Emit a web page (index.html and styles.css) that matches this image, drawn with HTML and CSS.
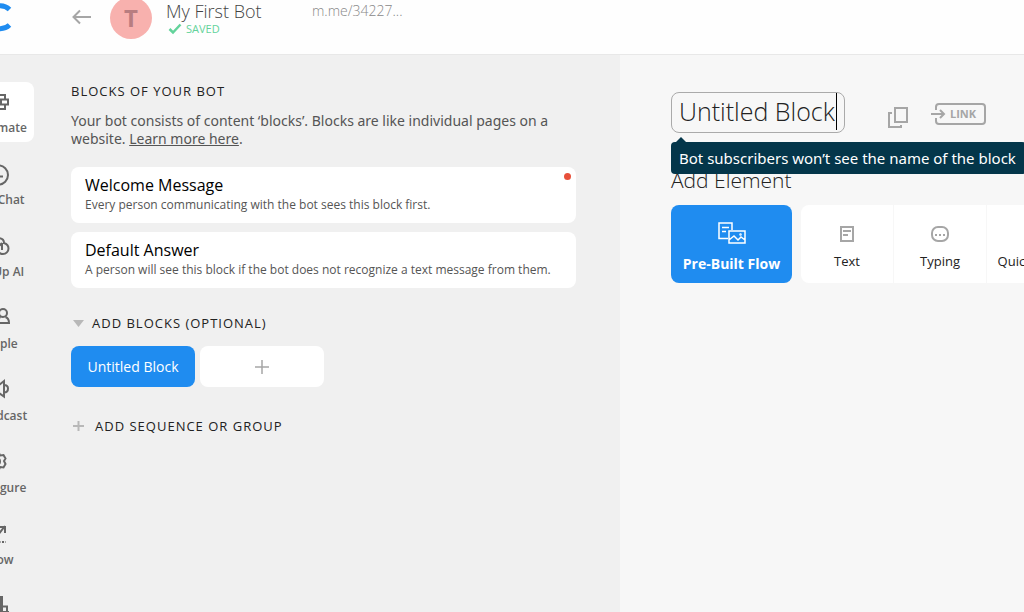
FILE: index.html
```html
<!DOCTYPE html><html lang="en"><head><meta charset="utf-8">
<title>My First Bot</title>
<meta name="viewport" content="width=device-width, initial-scale=1.0">
<link rel="stylesheet" href="styles.css">
</head>
<body>

<header class="header">
	<a class="logo" href="#" aria-label="Home">
		<svg width="32" height="32" viewBox="0 0 32 32"><path d="M27.500 8.500A13 11.500 0 1 0 27.500 24" fill="none" stroke="#1f8cf0" stroke-width="5"/></svg>
	</a>
	<button class="back" type="button" aria-label="Back">
		<svg width="20" height="16" viewBox="0 0 20 16"><path d="M19 8H2M8 1.500L1.500 8L8 14.500" fill="none" stroke="#a6a6a6" stroke-width="2"/></svg>
	</button>
	<div class="avatar">T</div>
	<div class="bot">
		<h1 class="bot-name">My First Bot</h1>
		<div class="saved">
			<svg width="14" height="12" viewBox="0 0 14 12"><path d="M1.500 6L5 9.500L12.500 1.500" fill="none" stroke="#63d39b" stroke-width="2.500"/></svg>
			SAVED
		</div>
	</div>
	<a class="bot-url" href="#">m.me/34227...</a>
</header>

<div class="page">

<nav class="nav">
	<a class="nav-item active" href="#">
		<svg class="nav-icon" viewBox="0 0 24 24"><path d="M10 5h9v4.500h-9zM15 9.500h7v5h-7zM10 14.500h9V19h-9zM3 9.500h7v5H3zM10 9.500v5"/></svg>
		Automate
	</a>
	<a class="nav-item" href="#">
		<svg class="nav-icon" viewBox="0 0 24 24"><circle cx="12.500" cy="13" r="9.500"/><path d="M9 9v2M9 14.500h8"/></svg>
		Live Chat
	</a>
	<a class="nav-item" href="#">
		<svg class="nav-icon" viewBox="0 0 24 24"><path d="M9 20a6 6 0 0 1-6-7c1-5 4-9 9-9c4 0 6 2 6 5c3 1 4.500 3 4.500 5.500a5.500 5.500 0 0 1-5.500 5.500c-4 0-5-2-5-5c0-2-1-3-3-3M12 13l4-4M16 9v7"/></svg>
		Set Up AI
	</a>
	<a class="nav-item" href="#">
		<svg class="nav-icon" viewBox="0 0 24 24"><circle cx="17" cy="7" r="4"/><path d="M14.500 11c-2 1-3 3-3 6H23c0-3-1-5-3.500-6M8 3a4 4 0 0 0-1 7M3 17c0-3 1-5 3-6M2 17h6"/></svg>
		People
	</a>
	<a class="nav-item" href="#">
		<svg class="nav-icon" viewBox="0 0 24 24"><path d="M18 3v15.500L13 15H5V7h8zM18 7c3 0 4 1.500 4 3.500S21 14.500 18 14.500"/></svg>
		Broadcast
	</a>
	<a class="nav-item" href="#">
		<svg class="nav-icon" viewBox="0 0 24 24"><path d="M9 3h4l1 2.500l3.500-.5l2 3.500l-1.500 2.500l1.500 3l-2 3.500l-3.500-.5l-1 2.500H9l-1-2.500l-3.500.5l-2-3.500L4 11.500L2.500 8.500l2-3.500l3.500.5z"/><circle cx="11" cy="11.500" r="3"/></svg>
		Configure
	</a>
	<a class="nav-item" href="#">
		<svg class="nav-icon" viewBox="0 0 24 24"><path d="M3 15l5-4l4 2l7-9M13 5h6v6"/><path d="M2 20h18" stroke-dasharray="2 1.500"/></svg>
		Grow
	</a>
	<a class="nav-item" href="#">
		<svg class="nav-icon" viewBox="0 0 24 24"><path d="M3 18V9h7v9M10 18V3h6v15M17 12.500h4V18M2 18h21M14 3v15"/></svg>
		Analyze
	</a>
</nav>

<main class="blocks">
	<h2 class="heading">BLOCKS OF YOUR BOT</h2>
	<p class="intro">Your bot consists of content ‘blocks’. Blocks are like individual pages on a website. <a href="#">Learn more here</a>.</p>

	<div class="cards">
		<a class="card" href="#">
			<span class="card-title">Welcome Message</span>
			<span class="card-text">Every person communicating with the bot sees this block first.</span>
			<span class="dot"></span>
		</a>
		<a class="card" href="#">
			<span class="card-title">Default Answer</span>
			<span class="card-text">A person will see this block if the bot does not recognize a text message from them.</span>
		</a>
	</div>

	<h2 class="heading group">
		<svg width="11" height="7" viewBox="0 0 11 7"><path d="M0 0h11L5.500 7z" fill="#b8b8b8"/></svg>
		ADD BLOCKS (OPTIONAL)
	</h2>
	<div class="tiles">
		<button class="tile selected" type="button">Untitled Block</button>
		<button class="tile" type="button" aria-label="Add block">
			<svg width="14" height="14" viewBox="0 0 14 14"><path d="M7 0v14M0 7h14" stroke="#a6a6a6" stroke-width="1.500"/></svg>
		</button>
	</div>

	<button class="heading add-group" type="button">
		<svg width="11" height="10" viewBox="0 0 11 10"><path d="M5.500 0v10M0 5h11" stroke="#b8b8b8" stroke-width="2"/></svg>
		ADD SEQUENCE OR GROUP
	</button>
</main>

<section class="editor">
	<div class="editor-top">
		<div class="name">
			<input class="name-input" type="text" value="Untitled Block" aria-label="Block name">
			<span class="caret"></span>
			<div class="tooltip">Bot subscribers won’t see the name of the block</div>
		</div>
		<button class="tool" type="button" aria-label="Copy block">
			<svg width="20" height="21" viewBox="0 0 20 21"><path d="M7 1h12v14H7zM4 6H1v14h12v-2" fill="none" stroke="#a6a6a6" stroke-width="2"/></svg>
		</button>
		<button class="tool link" type="button" aria-label="LINK">
			<svg width="55" height="22" viewBox="0 0 55 22"><path d="M5 7V4a3 3 0 0 1 3-3h43a3 3 0 0 1 3 3v14a3 3 0 0 1-3 3H8a3 3 0 0 1-3-3v-3M0 11h12M9 7l4 4l-4 4" fill="none" stroke="#a6a6a6" stroke-width="2"/></svg>
			<span class="link-text">LINK</span>
		</button>
	</div>

	<h2 class="add-title">Add Element</h2>
	<div class="elements">
		<button class="flow" type="button">
			<svg width="28" height="22" viewBox="0 0 28 22" fill="none" stroke="#fff" stroke-width="1.500"><path d="M10 16.500H1V1h13v7M4 5.500h7M4 9.500h4M11 9h16v12H11zM11 18l5-4l4 4l3-3l4 3"/><circle cx="22.500" cy="12.500" r=".5"/></svg>
			Pre-Built Flow
		</button>
		<div class="strip">
			<button class="element" type="button">
				<svg width="18" height="18" viewBox="0 0 18 18" fill="none" stroke="#a6a6a6" stroke-width="2"><path d="M3 2h12v14H3zM5 6h8M5 10h5"/></svg>
				Text
			</button>
			<button class="element" type="button">
				<svg width="18" height="18" viewBox="0 0 18 18" fill="none" stroke="#a6a6a6" stroke-width="2"><rect x="1" y="2" width="16" height="14" rx="6"/><path d="M4 10h2M8 10h2M12 10h2"/></svg>
				Typing
			</button>
			<button class="element" type="button">
				<svg width="18" height="18" viewBox="0 0 18 18" fill="none" stroke="#a6a6a6" stroke-width="2"><path d="M2 3h14v10H9l-4 3v-3H2z"/></svg>
				Quick Reply
			</button>
		</div>
	</div>
</section>

</div>

</body>
</html>
```
FILE: styles.css
```css
* {
	box-sizing: border-box;
}
body {
	margin: 0;
	height: 100vh;
	display: flex;
	flex-direction: column;
	overflow: hidden;
	background: #f0f0f0;
	color: #222;
	font-family: "Open Sans", "Noto Sans", sans-serif;
	font-size: 14px;
}
h1, h2, p {
	margin: 0;
}
a {
	color: inherit;
	text-decoration: none;
}
button {
	margin: 0;
	padding: 0;
	border: 0;
	background: none;
	color: inherit;
	font: inherit;
	cursor: pointer;
}
svg {
	display: block;
	flex: none;
}
.header {
	display: flex;
	align-items: flex-start;
	flex: none;
	height: 55px;
	border-bottom: 1px solid #e8e8e8;
	background: #fefefe;
}
.logo {
	margin: 1px 0 0 -18px;
}
.back {
	margin: 9px 0 0 58px;
}
.avatar {
	width: 42px;
	height: 42px;
	margin: -3px 0 0 18px;
	border-radius: 50%;
	background: #f8b1ae;
	color: #b87d80;
	font-size: 24px;
	font-weight: bold;
	line-height: 42px;
	text-align: center;
}
.bot {
	width: 146px;
	margin-left: 14px;
}
.bot-name {
	color: #444;
	font-size: 18px;
	font-weight: 300;
	line-height: 22px;
}
.saved {
	display: flex;
	align-items: center;
	gap: 4px;
	margin-left: 2px;
	color: #63d39b;
	font-size: 11px;
	line-height: 14px;
}
.bot-url {
	color: #888;
	font-size: 14px;
	font-weight: 300;
	line-height: 22px;
}
.page {
	display: flex;
	flex: 1;
	min-height: 0;
}
.nav {
	display: flex;
	flex-direction: column;
	gap: 12px;
	flex: none;
	width: 72px;
	margin: 27px 6px 0 -38px;
}
.nav-item {
	display: flex;
	flex-direction: column;
	align-items: center;
	gap: 4px;
	flex: none;
	height: 60px;
	padding-top: 8px;
	border-radius: 8px;
	color: #666;
	font-size: 12px;
	font-weight: 600;
	line-height: 19px;
	white-space: nowrap;
}
.nav-item.active {
	background: #fff;
}
.nav-icon {
	width: 24px;
	height: 24px;
	fill: none;
	stroke: #666;
	stroke-width: 2;
}
.blocks {
	flex: 0 0 580px;
	padding: 26px 44px 0 31px;
}
.heading {
	font-size: 13px;
	font-weight: 400;
	letter-spacing: 1px;
	line-height: 20px;
}
.intro {
	margin-top: 11px;
	color: #555;
	font-family: "Noto Sans", sans-serif;
	font-size: 14px;
	line-height: 18px;
}
.intro a {
	text-decoration: underline;
}
.cards {
	display: flex;
	flex-direction: column;
	gap: 9px;
	margin-top: 19px;
}
.card {
	position: relative;
	display: flex;
	flex-direction: column;
	height: 56px;
	padding: 8px 14px;
	border-radius: 8px;
	background: #fff;
}
.card-title {
	color: #000;
	font-size: 16px;
	line-height: 21px;
}
.card-text {
	color: #555;
	font-size: 12px;
	line-height: 18px;
	white-space: nowrap;
}
.dot {
	position: absolute;
	top: 6px;
	right: 5px;
	width: 7px;
	height: 7px;
	border-radius: 50%;
	background: #e8503a;
}
.group {
	display: flex;
	align-items: center;
	gap: 8px;
	margin: 25px 0 13px 2px;
}
.tiles {
	display: flex;
	gap: 5px;
}
.tile {
	display: flex;
	align-items: center;
	justify-content: center;
	width: 124px;
	height: 41px;
	border-radius: 8px;
	background: #fff;
}
.tile.selected {
	background: #1f8cf0;
	color: #fff;
}
.add-group {
	display: flex;
	align-items: center;
	gap: 11px;
	margin: 29px 0 0 2px;
}
.editor {
	flex: 1;
	min-width: 0;
	padding: 37px 0 0 51px;
	overflow: hidden;
	background: #f7f7f7;
}
.editor-top {
	display: flex;
}
.name {
	position: relative;
	width: 174px;
}
.name-input {
	display: block;
	width: 100%;
	height: 41px;
	padding: 0 7px 3px;
	border: 1px solid #aaa;
	border-radius: 8px;
	background: #f7f7f7;
	color: #222;
	font-family: inherit;
	font-size: 25px;
	font-weight: 300;
	outline: none;
}
.caret {
	position: absolute;
	top: 1px;
	right: 8px;
	width: 1px;
	height: 37px;
	background: #000;
}
.tooltip {
	position: absolute;
	top: 50px;
	left: 0;
	z-index: 1;
	width: max-content;
	padding: 0 10px 0 8px;
	border-radius: 4px;
	background: #04364a;
	color: #fff;
	font-family: "Noto Sans", sans-serif;
	font-size: 15px;
	line-height: 32px;
	white-space: nowrap;
}
.tooltip::before {
	content: "";
	position: absolute;
	top: -5px;
	left: 5px;
	border: 5px solid transparent;
	border-top: 0;
	border-bottom-color: #04364a;
}
.tool {
	position: relative;
	align-self: flex-start;
	margin: 15px 0 0 43px;
}
.link {
	margin: 11px 0 0 23px;
}
.link-text {
	position: absolute;
	top: 0;
	left: 19px;
	color: #a6a6a6;
	font-size: 11px;
	font-weight: bold;
	line-height: 22px;
}
.add-title {
	margin-top: 32px;
	font-size: 21px;
	font-weight: 300;
	line-height: 30px;
}
.elements {
	display: flex;
	gap: 9px;
	margin-top: 10px;
}
.flow {
	display: flex;
	flex-direction: column;
	align-items: center;
	gap: 10px;
	flex: none;
	width: 121px;
	height: 78px;
	padding-top: 17px;
	border-radius: 8px;
	background: #1f8cf0;
	color: #fff;
	font-size: 14px;
	font-weight: bold;
	line-height: 20px;
}
.strip {
	display: flex;
	gap: 1px;
}
.element {
	display: flex;
	flex-direction: column;
	align-items: center;
	gap: 8px;
	flex: none;
	width: 92px;
	height: 78px;
	padding-top: 20px;
	background: #fff;
	font-size: 13px;
	line-height: 20px;
}
.element:first-child {
	border-radius: 8px 0 0 8px;
}
```
